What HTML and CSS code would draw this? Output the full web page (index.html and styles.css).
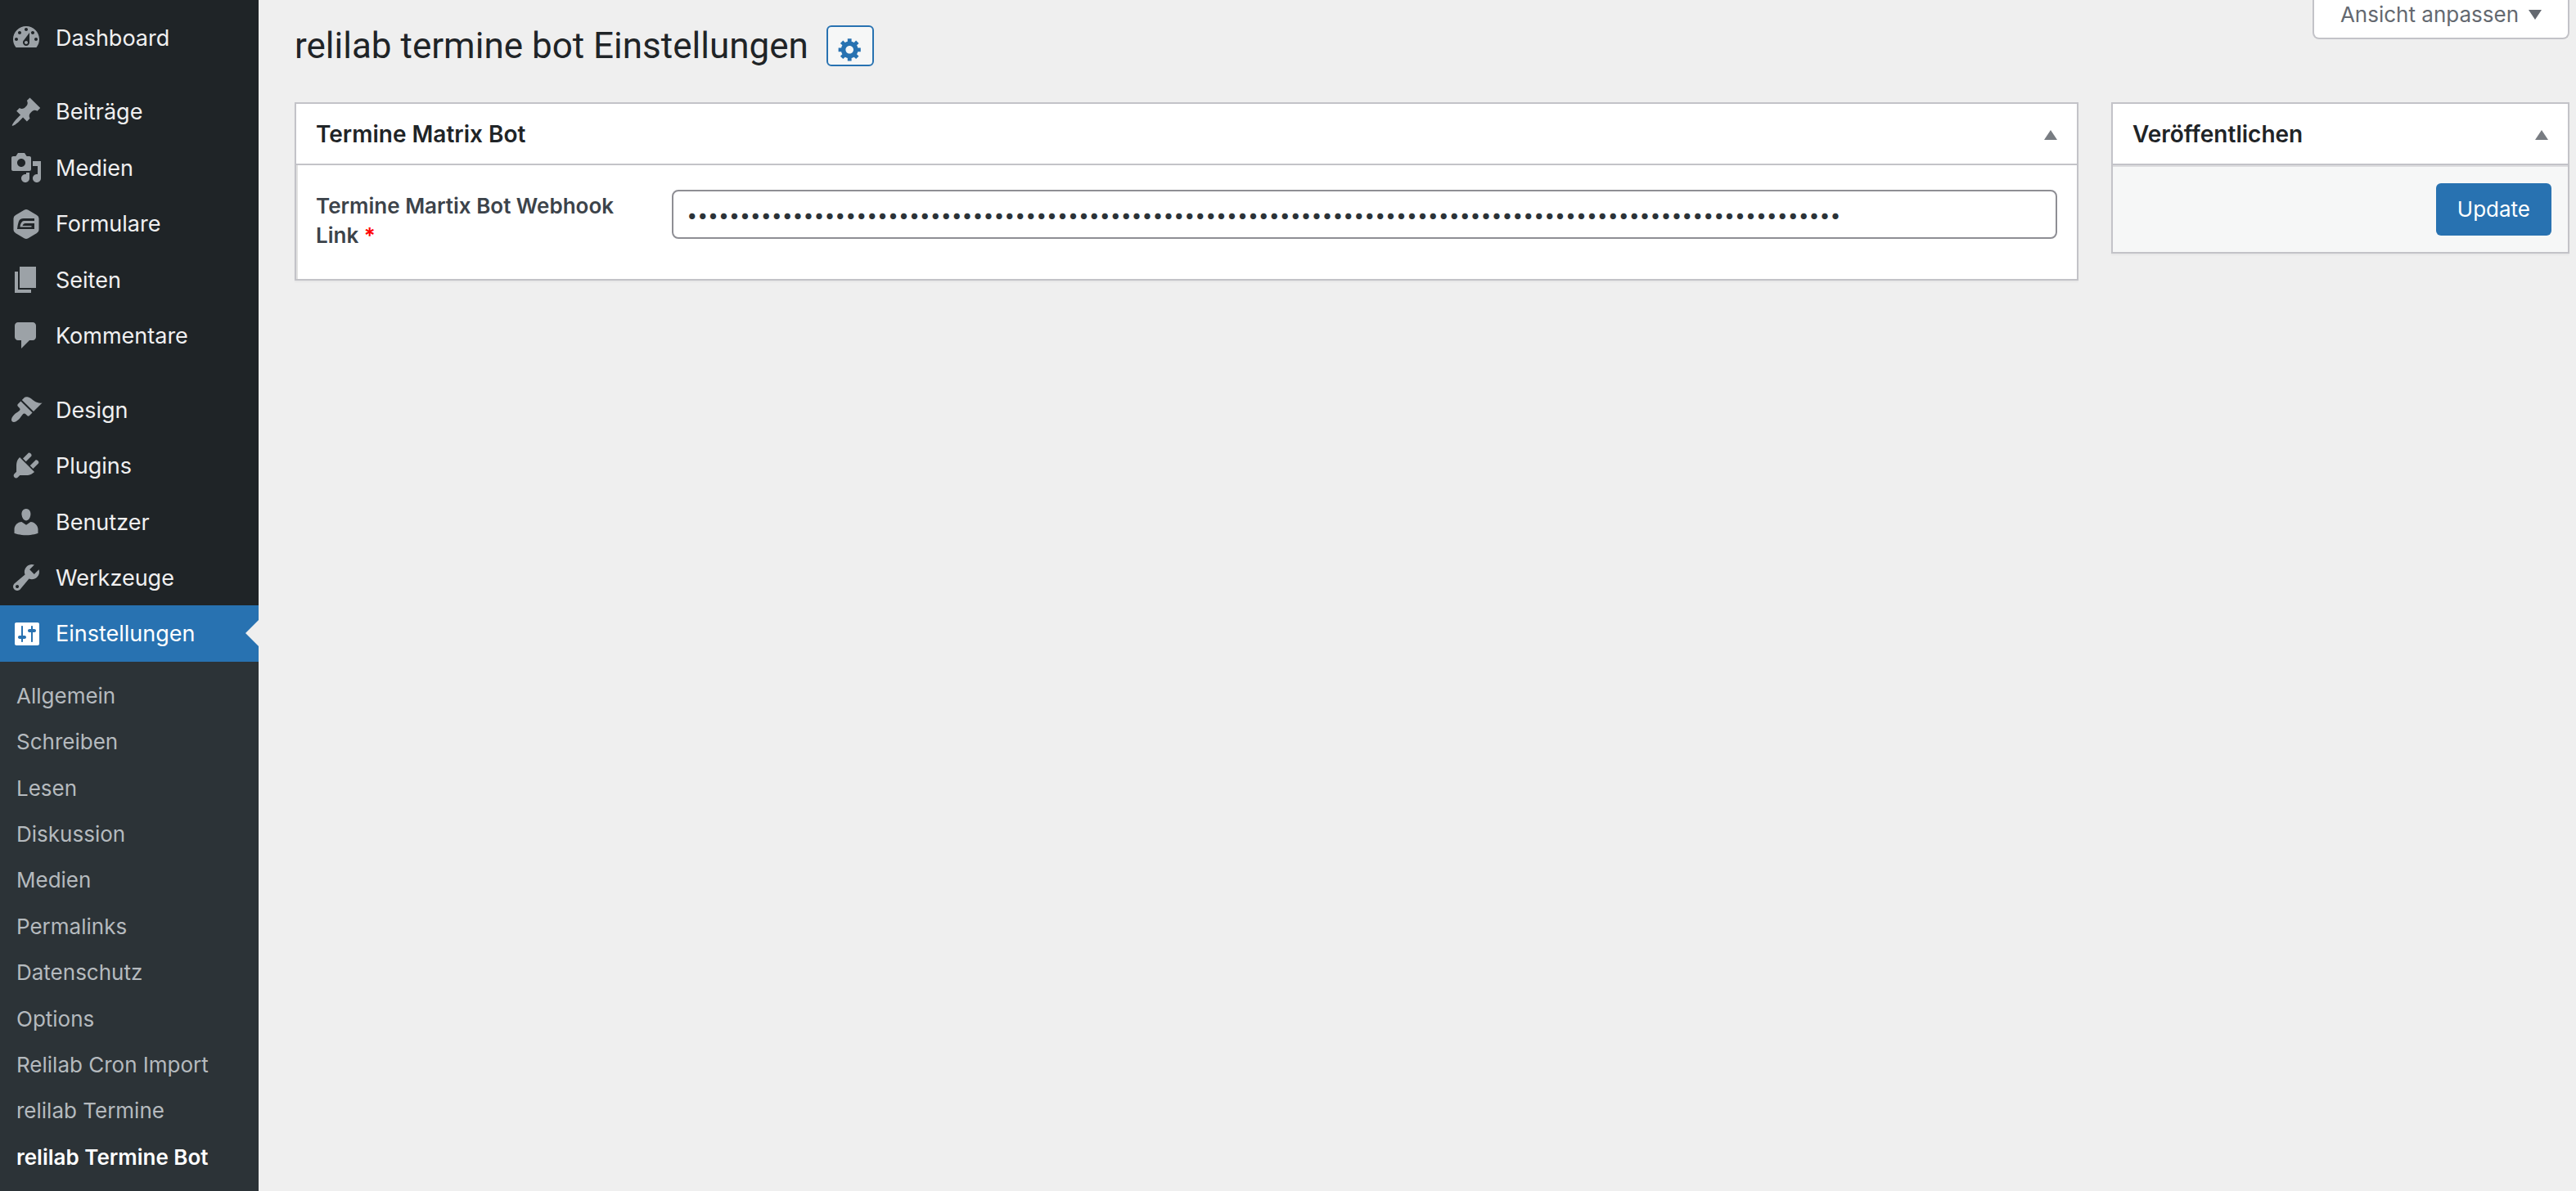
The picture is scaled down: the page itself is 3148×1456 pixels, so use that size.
FILE: index.html
```html
<!DOCTYPE html>
<html lang="de">
<head>
<meta charset="utf-8">
<title>relilab termine bot Einstellungen</title>
<link rel="stylesheet" href="styles.css">
</head>
<body>
<div class="layout">
  <nav class="sidebar" aria-label="Hauptmenü">
    <ul class="menu">
      <li><a class="menu-link" href="#"><svg class="icon" viewBox="0 0 20 20"><path fill-rule="evenodd" d="M3.76 16h12.48c1.1-1.37 1.76-3.11 1.76-5 0-4.42-3.58-8-8-8s-8 3.58-8 8c0 1.89.66 3.63 1.76 5zM10 4c.55 0 1 .45 1 1s-.45 1-1 1-1-.45-1-1 .45-1 1-1zM6 6c.55 0 1 .45 1 1s-.45 1-1 1-1-.45-1-1 .45-1 1-1zm8 0c.55 0 1 .45 1 1s-.45 1-1 1-1-.45-1-1 .45-1 1-1zm-5.370 5.550L12 7v6c0 1.100-.9 2-2 2s-2-.9-2-2c0-.57.24-1.080.63-1.450zM4 10c.55 0 1 .45 1 1s-.45 1-1 1-1-.45-1-1 .45-1 1-1zm12 0c.55 0 1 .45 1 1s-.45 1-1 1-1-.45-1-1 .45-1 1-1zm-5 3c0-.55-.45-1-1-1s-1 .45-1 1 .45 1 1 1 1-.45 1-1z"/></svg>Dashboard</a></li>
      <li class="group-start"><a class="menu-link" href="#"><svg class="icon" viewBox="0 0 20 20"><path d="M10.44 3.02l1.82-1.82 6.36 6.35-1.83 1.82c-1.05-.68-2.48-.57-3.41.36l-.75.75c-.92.93-1.04 2.35-.35 3.41l-1.83 1.82-2.41-2.41-2.8 2.79c-.42.42-3.38 2.71-3.8 2.29s1.86-3.39 2.28-3.81l2.79-2.79L4.1 9.36l1.83-1.82c1.05.69 2.48.57 3.4-.36l.75-.75c.93-.92 1.05-2.35.36-3.41z"/></svg>Beiträge</a></li>
      <li><a class="menu-link" href="#"><svg class="icon" viewBox="0 0 20 20"><path fill-rule="evenodd" d="M13 11V4c0-.55-.45-1-1-1h-1.67L9 1H5L3.670 3H2c-.55 0-1 .45-1 1v7c0 .55.45 1 1 1h10c.55 0 1-.45 1-1zM7 4.500c1.380 0 2.500 1.120 2.500 2.500S8.380 9.500 7 9.500 4.500 8.380 4.500 7 5.620 4.500 7 4.500zM14 6h5v10.500c0 1.380-1.120 2.500-2.500 2.500S14 17.880 14 16.500s1.120-2.500 2.500-2.500c.17 0 .34.02.5.05V9h-3V6zm-4 8.050V13h2v3.500c0 1.380-1.120 2.500-2.500 2.500S7 17.880 7 16.500 8.120 14 9.500 14c.17 0 .34.02.5.05z"/></svg>Medien</a></li>
      <li><a class="menu-link" href="#"><svg class="icon icon-forms" viewBox="0 0 40 40"><path fill-rule="evenodd" d="M17.500 2.700Q20 1.200 22.500 2.700L33 9Q35.500 10.500 35.500 13V27Q35.500 29.500 33 31L22.500 37.300Q20 38.800 17.500 37.300L7 31Q4.500 29.500 4.500 27V13Q4.500 10.500 7 9L17.500 2.700ZM30 13H17Q12 13 10.800 17Q9.500 21 9 26H30V19H19Q16.500 19 15.500 22H26.500V23.500H12.500Q13 17 17 16H30Z"/></svg>Formulare</a></li>
      <li><a class="menu-link" href="#"><svg class="icon" viewBox="0 0 20 20"><path d="M6 15V2h10v13H6zm-1 1h8v2H3V5h2v11z"/></svg>Seiten</a></li>
      <li><a class="menu-link" href="#"><svg class="icon" viewBox="0 0 20 20"><path d="M5 2h9c1.100 0 2 .9 2 2v7c0 1.100-.9 2-2 2h-2l-5 5v-5H5c-1.100 0-2-.9-2-2V4c0-1.100.9-2 2-2z"/></svg>Kommentare</a></li>
      <li class="group-start"><a class="menu-link" href="#"><svg class="icon" viewBox="0 0 20 20"><path d="M14.480 11.060L7.410 3.990l1.500-1.500c.5-.56 2.300-.47 3.510.32 1.210.8 1.430 1.280 2.910 2.100 1.180.64 2.450 1.260 4.450.85zm-.71.71L6.700 4.700 4.930 6.470c-.39.39-.39 1.020 0 1.410l1.060 1.060c.39.39.39 1.030 0 1.420-.6.6-1.430 1.110-2.210 1.690-.35.26-.7.53-1.010.84C1.430 14.230.4 16.080 1.400 17.070c.99 1 2.840-.03 4.180-1.360.31-.31.58-.66.85-1.020.57-.78 1.080-1.610 1.690-2.210.39-.39 1.020-.39 1.410 0l1.060 1.060c.39.39 1.020.39 1.410 0z"/></svg>Design</a></li>
      <li><a class="menu-link" href="#"><svg class="icon" viewBox="0 0 20 20"><path d="M13.11 4.36L9.87 7.6 8 5.73l3.24-3.24c.35-.34 1.05-.2 1.56.32.52.51.66 1.21.31 1.55zm-8 1.77l.91-1.12 9.01 9.01-1.19.84c-.71.71-2.63 1.16-3.82 1.16H6.14L4.9 17.26c-.59.59-1.54.59-2.12 0-.59-.58-.59-1.53 0-2.12l1.24-1.24v-3.88c0-1.13.4-3.19 1.09-3.89zm7.26 3.97l3.24-3.24c.34-.35 1.04-.21 1.55.31.52.51.66 1.21.31 1.55l-3.24 3.25z"/></svg>Plugins</a></li>
      <li><a class="menu-link" href="#"><svg class="icon" viewBox="0 0 20 20"><path d="M10 9.25c-2.27 0-2.73-3.44-2.73-3.44C7 4.02 7.82 2 9.97 2c2.16 0 2.98 2.02 2.71 3.81 0 0-.41 3.44-2.68 3.44zm0 2.57L12.72 10c2.39 0 4.52 2.33 4.52 4.53v2.49s-3.65 1.13-7.24 1.13c-3.65 0-7.24-1.13-7.24-1.13v-2.49c0-2.25 1.94-4.48 4.47-4.48z"/></svg>Benutzer</a></li>
      <li><a class="menu-link" href="#"><svg class="icon" viewBox="0 0 20 20"><path fill-rule="evenodd" d="M16.68 9.77c-1.34 1.34-3.3 1.67-4.95.99l-5.41 6.52c-.99.99-2.59.99-3.58 0s-.99-2.59 0-3.57l6.52-5.42c-.68-1.65-.35-3.61.99-4.95 1.28-1.28 3.12-1.62 4.72-1.06l-2.89 2.89 2.82 2.82 2.86-2.87c.53 1.58.18 3.39-1.08 4.65zM3.81 16.21c.4.39 1.04.39 1.43 0 .4-.4.4-1.04 0-1.43-.39-.4-1.03-.4-1.43 0-.39.39-.39 1.03 0 1.43z"/></svg>Werkzeuge</a></li>
      <li>
        <a class="menu-link is-active" href="#"><svg class="icon" viewBox="0 0 20 20"><path fill-rule="evenodd" d="M18 16V4c0-.55-.45-1-1-1H4c-.55 0-1 .45-1 1v12c0 .55.45 1 1 1h13c.55 0 1-.45 1-1zM8 11h1c.55 0 1 .45 1 1s-.45 1-1 1H8v1.5c0 .28-.22.5-.5.5s-.5-.22-.5-.5V13H6c-.55 0-1-.45-1-1s.45-1 1-1h1V5.5c0-.28.22-.5.5-.5s.5.22.5.5V11zm5-2h-1c-.55 0-1-.45-1-1s.45-1 1-1h1V5.5c0-.28.22-.5.5-.5s.5.22.5.5V7h1c.55 0 1 .45 1 1s-.45 1-1 1h-1v5.5c0 .28-.22.5-.5.5s-.5-.22-.5-.5V9z"/></svg>Einstellungen</a>
        <ul class="submenu">
          <li><a href="#">Allgemein</a></li>
          <li><a href="#">Schreiben</a></li>
          <li><a href="#">Lesen</a></li>
          <li><a href="#">Diskussion</a></li>
          <li><a href="#">Medien</a></li>
          <li><a href="#">Permalinks</a></li>
          <li><a href="#">Datenschutz</a></li>
          <li><a href="#">Options</a></li>
          <li><a href="#">Relilab Cron Import</a></li>
          <li><a href="#">relilab Termine</a></li>
          <li><a class="is-current" href="#" aria-current="page">relilab Termine Bot</a></li>
        </ul>
      </li>
    </ul>
  </nav>

  <main class="content">
    <header class="page-head">
      <h1>relilab termine bot Einstellungen</h1>
      <button class="gear-button" type="button" aria-label="Feldgruppe bearbeiten"><svg viewBox="0 0 20 20"><path fill-rule="evenodd" d="M18 12h-2.18c-.17.7-.44 1.35-.81 1.93l1.54 1.54-2.1 2.1-1.54-1.54c-.58.36-1.23.63-1.91.79V19H8v-2.18c-.68-.16-1.33-.43-1.91-.79l-1.54 1.54-2.12-2.12 1.54-1.54c-.36-.58-.63-1.23-.79-1.91H1V9.03h2.17c.16-.7.44-1.35.8-1.94L2.43 5.55l2.1-2.1 1.54 1.54c.58-.37 1.24-.64 1.93-.81V2h3v2.18c.68.16 1.33.43 1.91.79l1.54-1.54 2.12 2.12-1.54 1.54c.36.59.64 1.24.8 1.94H18V12zm-8.5 1.5c1.66 0 3-1.34 3-3s-1.34-3-3-3-3 1.34-3 3 1.34 3 3 3z"/></svg></button>
      <button class="screen-options" type="button">Ansicht anpassen<svg class="triangle" viewBox="0 0 16 12"><path d="M0 0h16L8 12z"/></svg></button>
    </header>

    <form class="columns">
      <section class="panel">
        <header class="panel-head">
          <h2>Termine Matrix Bot</h2>
          <button class="toggle" type="button" aria-label="Termine Matrix Bot umschalten"><svg class="triangle" viewBox="0 0 16 12"><path d="M8 0l8 12H0z"/></svg></button>
        </header>
        <div class="field">
          <label for="webhook">Termine Martix Bot Webhook Link <span class="required">*</span></label>
          <div class="field-input"><input id="webhook" type="password" required value="1234567890123456789012345678901234567890123456789012345678901234567890123456789012345678901234567890123456789"></div>
        </div>
      </section>

      <section class="panel">
        <header class="panel-head">
          <h2>Veröffentlichen</h2>
          <button class="toggle" type="button" aria-label="Veröffentlichen umschalten"><svg class="triangle" viewBox="0 0 16 12"><path d="M8 0l8 12H0z"/></svg></button>
        </header>
        <div class="publish">
          <button class="primary" type="submit">Update</button>
        </div>
      </section>
    </form>
  </main>
</div>
</body>
</html>
```
FILE: styles.css
```css
* {
  box-sizing: border-box;
}

body {
  margin: 0;
  background: #efefef;
  color: #3c434a;
  font: 26px/1.4 Inter, "Liberation Sans", sans-serif;
}

h1,
h2,
ul {
  margin: 0;
  padding: 0;
}

ul {
  list-style: none;
}

a {
  text-decoration: none;
}

button,
input {
  font: inherit;
}

svg {
  display: block;
  fill: currentColor;
}

.layout {
  display: grid;
  grid-template-columns: 316px 1fr;
  min-height: 100vh;
}

/* Sidebar */

.sidebar {
  background: #1f2427;
}

.menu {
  padding-top: 12px;
}

.group-start {
  margin-top: 22px;
}

.menu-link {
  position: relative;
  display: flex;
  align-items: center;
  gap: 16px;
  padding: 17px 0 15px 12px;
  color: #f0f0f1;
  font-size: 27px;
  line-height: 1.35;
}

.icon {
  width: 40px;
  height: 40px;
  margin: -3px 0 -1px;
  color: #9ca2a7;
}

.menu-link.is-active {
  background: #2872b1;
  color: #fff;
}

.is-active .icon {
  color: #fff;
}

.menu-link.is-active::after {
  content: "";
  position: absolute;
  top: 18px;
  right: 0;
  border: 16px solid transparent;
  border-left-width: 0;
  border-right-color: #efefef;
}

.submenu {
  padding: 14px 0;
  background: #2c3337;
}

.submenu a {
  display: block;
  padding: 10px 20px;
  color: #b5babe;
}

.submenu a.is-current {
  color: #fff;
  font-weight: 600;
}

/* Page head */

.content {
  padding: 0 8px 0 44px;
}

.page-head {
  display: flex;
  align-items: flex-start;
  height: 125px;
}

h1 {
  padding-top: 26px;
  color: #1f2427;
  font-family: Roboto, "Liberation Sans", sans-serif;
  font-size: 44px;
  font-weight: 400;
  line-height: 60px;
}

.gear-button {
  width: 58px;
  height: 50px;
  margin: 31px 0 0 22px;
  padding: 8px 11px 0;
  border: 2px solid #2872b1;
  border-radius: 6px;
  background: #f6f7f7;
  color: #2872b1;
}

.screen-options {
  display: flex;
  align-items: center;
  gap: 12px;
  height: 48px;
  margin-left: auto;
  padding: 0 32px 10px;
  border: 2px solid #c3c3c8;
  border-top: 0;
  border-radius: 0 0 8px 8px;
  background: #fff;
  color: #646970;
}

.triangle {
  width: 16px;
  height: 12px;
}

/* Panels */

.columns {
  display: grid;
  grid-template-columns: 1fr 560px;
  align-items: start;
  gap: 40px;
}

.panel {
  border: 2px solid #c3c3c8;
  background: #fff;
  box-shadow: 0 2px 2px rgba(0, 0, 0, 0.04);
}

.panel-head {
  display: flex;
  align-items: center;
  justify-content: space-between;
  height: 75px;
  padding: 2px 24px 0;
  border-bottom: 2px solid #c3c3c8;
}

h2 {
  color: #1f2427;
  font-size: 28px;
  font-weight: 600;
}

.toggle {
  padding: 0;
  border: 0;
  background: none;
  color: #787c82;
}

.field {
  display: grid;
  grid-template-columns: 20% 1fr;
  padding: 30px 0 35px;
  box-shadow: inset 2px 0 #e1e1e1;
}

.field label {
  padding: 2px 24px 0;
  font-weight: 600;
  line-height: 36px;
}

.required {
  color: #f00;
}

.field-input {
  padding: 0 24px;
}

.field-input input {
  display: block;
  width: 100%;
  height: 60px;
  padding: 2px 16px 0;
  border: 2px solid #8e8e94;
  border-radius: 8px;
  background: #fff;
  color: #2c3338;
  font-size: 23px;
}

.publish {
  display: flex;
  justify-content: flex-end;
  padding: 20px;
  border-top: 2px solid #dcdcde;
  background: #f6f7f7;
}

.primary {
  height: 64px;
  padding: 0 26px;
  border: 0;
  border-radius: 6px;
  background: #2872b1;
  color: #fff;
}
```
